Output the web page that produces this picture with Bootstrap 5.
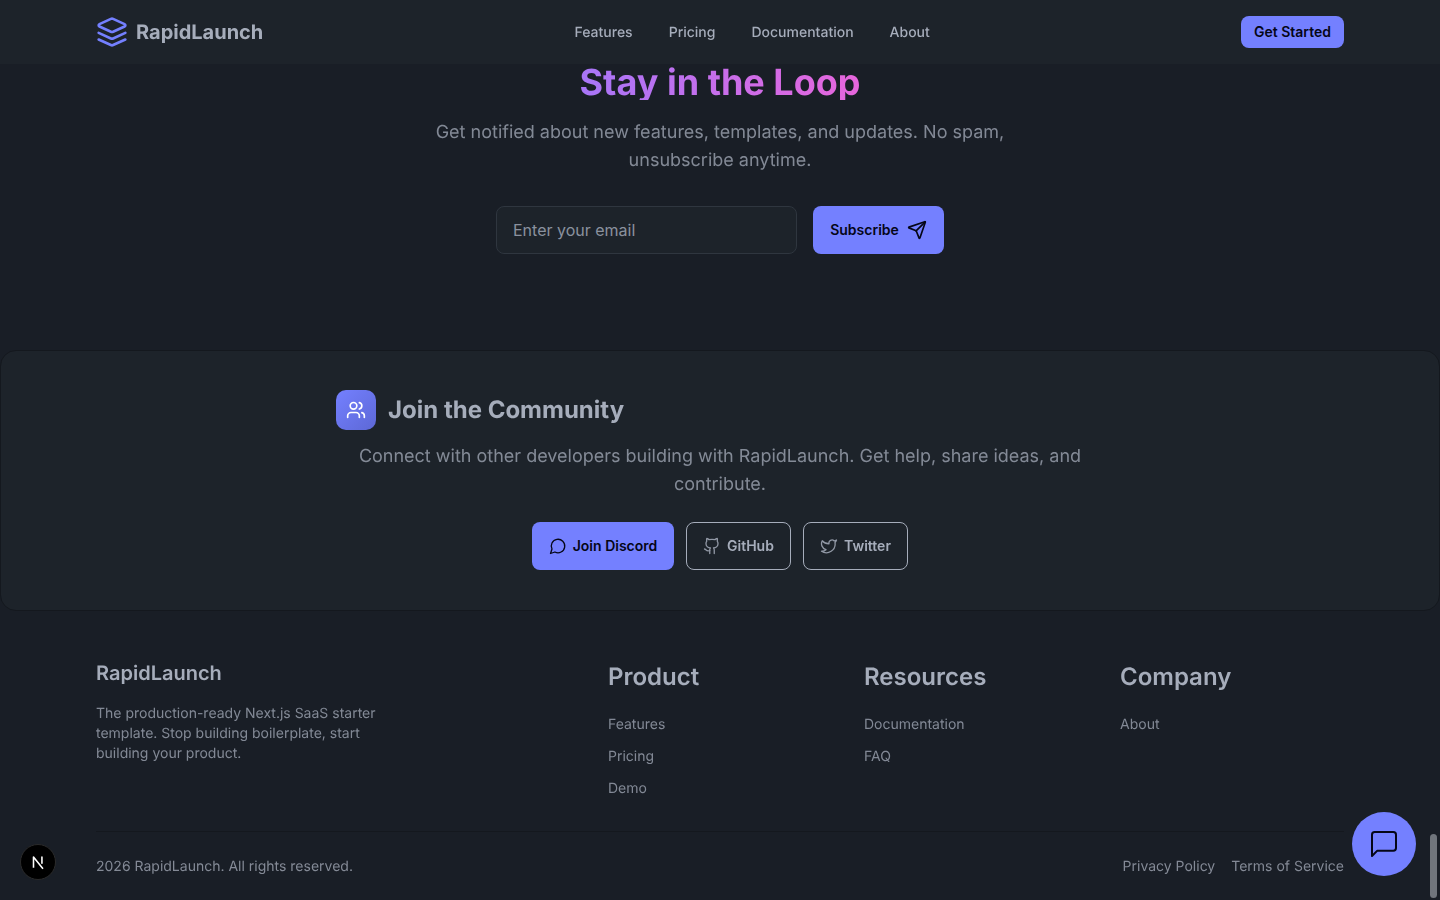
<!DOCTYPE html>
<html lang="en">
<head>
  <meta charset="UTF-8" />
  <title>RapidLaunch</title>
  <link href="https://cdn.jsdelivr.net/npm/bootstrap@5.3.3/dist/css/bootstrap.min.css" rel="stylesheet">
  <style>
    html, body { height: 100%; overflow: hidden; }
    body { background: #191e26; color: #a6adbb; font-family: Inter, "Noto Sans", sans-serif; font-size: 14px; text-rendering: geometricPrecision; }
    a, span, h2, h3, h4, h5, p, button, input { will-change: opacity; }
    svg { fill: none; stroke: currentColor; stroke-width: 2; stroke-linecap: round; stroke-linejoin: round; flex-shrink: 0; }
    a { color: inherit; text-decoration: none; }

    .top-bar { height: 64px; background: #1d232a; padding: 0 96px; }
    .logo-icon { color: #7480ff; }
    .logo-text { font-size: 20px; font-weight: 700; line-height: 28px; }
    .top-links { gap: 36px; font-weight: 500; line-height: 20px; padding-top: 1px; }
    .btn-brand { background: #7480ff; color: #050617; border: 0; font-weight: 600; border-radius: 8px; }
    .btn-brand:hover { background: #7480ff; color: #050617; }
    .btn-start { height: 32px; width: 103px; font-size: 14px; padding: 0 0 1px; }

    .news-block { height: 286px; text-align: center; }
    .news-title { font-size: 36px; line-height: 36px; font-weight: 700; margin: 0 auto 19px; background: linear-gradient(90deg, #a876f8, #e766dc); -webkit-background-clip: text; background-clip: text; color: transparent; width: max-content; }
    .news-text { font-size: 18px; line-height: 28px; color: #a6adbb; opacity: .75; width: 672px; margin: 0 auto 31px; }
    .email-box { width: 301px; height: 48px; background: #1d232a; border: 1px solid #2f363f; border-radius: 8px; font-size: 16px; padding: 0 16px; color: #a6adbb; }
    .email-box::placeholder { color: #a6adbb; opacity: .8; }
    .email-box:focus { background: #1d232a; color: #a6adbb; border-color: #2f363f; box-shadow: none; }
    .btn-sub { width: 131px; height: 48px; font-size: 14px; padding: 0 0 1px; }

    .community { height: 261px; background: #1d232a; border: 1px solid #14181e; border-radius: 16px; padding-top: 39px; }
    .community-inner { width: 768px; }
    .users-badge { width: 40px; height: 40px; border-radius: 10px; background: linear-gradient(135deg, #7480ff, #5d68d6); color: #fff; }
    .community-title { font-size: 24px; line-height: 40px; font-weight: 700; margin: 0; }
    .community-text { font-size: 18px; line-height: 28px; opacity: .75; margin: 13px 0 23px; text-align: center; }
    .community-btns { gap: 12px; }
    .btn-wide { height: 48px; font-size: 14px; padding: 0 0 1px; gap: 6px; }
    .btn-wide svg { stroke-width: 1.75; }
    .btn-discord { width: 142px; }
    .btn-line { background: transparent; border: 1px solid #a6adbb; color: #a6adbb; font-weight: 600; border-radius: 8px; }
    .btn-line:hover { background: transparent; border-color: #a6adbb; color: #a6adbb; }
    .btn-gh { width: 105px; }
    .btn-tw { width: 105px; }
    .btn-line svg { opacity: .85; }

    .foot { padding: 0 96px; }
    .foot-grid { display: grid; grid-template-columns: 1fr repeat(3, 224px); gap: 32px; height: 221px; padding-top: 48px; border-bottom: 1px solid #14181e; }
    .foot-brand { font-size: 20px; line-height: 28px; font-weight: 600; margin: 0 0 17px; }
    .foot-desc { line-height: 20px; opacity: .75; width: 296px; margin: 0; }
    .foot-head { font-size: 24px; line-height: 32px; font-weight: 600; margin: 2px 0 22px; }
    .foot-list { opacity: .75; line-height: 20px; gap: 12px; }
    .foot-end { padding-top: 25px; line-height: 20px; color: #848a96; }

    .chat-fab { position: fixed; right: 24px; bottom: 24px; width: 64px; height: 64px; border-radius: 50%; background: #7480ff; color: #050617; }
    .chat-fab svg { stroke-width: 1.5; }
    .next-mark { position: fixed; left: 20px; bottom: 20px; width: 36px; height: 36px; border-radius: 50%; background: #000; border: 1px solid #2b2b2b; }
    .scroll-thumb { position: fixed; right: 3px; top: 834px; width: 7px; height: 64px; border-radius: 4px; background: #70757c; }
  </style>
</head>
<body>

<nav class="top-bar d-flex align-items-center justify-content-between">
  <a href="#" class="d-flex align-items-center gap-2">
    <svg class="logo-icon" width="32" height="32" viewBox="0 0 24 24"><path d="m12.83 2.18a2 2 0 0 0-1.66 0L2.6 6.08a1 1 0 0 0 0 1.83l8.58 3.91a2 2 0 0 0 1.66 0l8.58-3.9a1 1 0 0 0 0-1.83Z"/><path d="m22 17.65-9.17 4.16a2 2 0 0 1-1.66 0L2 17.65"/><path d="m22 12.65-9.17 4.16a2 2 0 0 1-1.66 0L2 12.65"/></svg>
    <span class="logo-text">RapidLaunch</span>
  </a>
  <div class="top-links d-flex">
    <a href="#">Features</a>
    <a href="#">Pricing</a>
    <a href="#">Documentation</a>
    <a href="#">About</a>
  </div>
  <button class="btn btn-brand btn-start">Get Started</button>
</nav>

<section class="news-block">
  <h2 class="news-title">Stay in the Loop</h2>
  <p class="news-text">Get notified about new features, templates, and updates. No spam, unsubscribe anytime.</p>
  <form class="d-flex justify-content-center gap-3">
    <input class="form-control email-box" type="email" placeholder="Enter your email">
    <button type="button" class="btn btn-brand btn-sub d-flex align-items-center justify-content-center gap-2">
      Subscribe
      <svg width="20" height="20" viewBox="0 0 24 24"><path d="M14.536 21.686a.5.5 0 0 0 .937-.024l6.5-19a.496.496 0 0 0-.635-.635l-19 6.5a.5.5 0 0 0-.024.937l7.93 3.18a2 2 0 0 1 1.112 1.11z"/><path d="m21.854 2.147-10.94 10.939"/></svg>
    </button>
  </form>
</section>

<section class="community">
  <div class="community-inner mx-auto">
    <div class="d-flex align-items-center gap-2">
      <div class="users-badge d-flex align-items-center justify-content-center me-1">
        <svg width="20" height="20" viewBox="0 0 24 24"><path d="M16 21v-2a4 4 0 0 0-4-4H6a4 4 0 0 0-4 4v2"/><circle cx="9" cy="7" r="4"/><path d="M22 21v-2a4 4 0 0 0-3-3.87"/><path d="M16 3.13a4 4 0 0 1 0 7.75"/></svg>
      </div>
      <h3 class="community-title">Join the Community</h3>
    </div>
    <p class="community-text">Connect with other developers building with RapidLaunch. Get help, share ideas, and contribute.</p>
    <div class="community-btns d-flex justify-content-center">
      <button class="btn btn-brand btn-wide btn-discord d-flex align-items-center justify-content-center">
        <svg width="18" height="18" viewBox="0 0 24 24"><path d="M7.9 20A9 9 0 1 0 4 16.1L2 22Z"/></svg>
        Join Discord
      </button>
      <button class="btn btn-line btn-wide btn-gh d-flex align-items-center justify-content-center">
        <svg width="18" height="18" viewBox="0 0 24 24"><path d="M15 22v-4a4.8 4.8 0 0 0-1-3.5c3 0 6-2 6-5.5.08-1.25-.27-2.48-1-3.5.28-1.15.28-2.35 0-3.5 0 0-1 0-3 1.5-2.64-.5-5.36-.5-8 0C6 2 5 2 5 2c-.3 1.15-.3 2.35 0 3.5A5.403 5.403 0 0 0 4 9c0 3.5 3 5.5 6 5.5-.39.49-.68 1.05-.85 1.65-.17.6-.22 1.23-.15 1.85v4"/><path d="M9 18c-4.51 2-5-2-7-2"/></svg>
        GitHub
      </button>
      <button class="btn btn-line btn-wide btn-tw d-flex align-items-center justify-content-center">
        <svg width="18" height="18" viewBox="0 0 24 24"><path d="M22 4s-.7 2.1-2 3.4c1.6 10-9.4 17.3-18 11.6 2.2.1 4.4-.6 6-2C3 15.5.5 9.6 3 5c2.2 2.6 5.6 4.1 9 4-.9-4.2 4-6.6 7-3.8 1.1 0 3-1.2 3-1.2z"/></svg>
        Twitter
      </button>
    </div>
  </div>
</section>

<footer class="foot">
  <div class="foot-grid">
    <div>
      <h4 class="foot-brand">RapidLaunch</h4>
      <p class="foot-desc">The production-ready Next.js SaaS starter template. Stop building boilerplate, start building your product.</p>
    </div>
    <div>
      <h5 class="foot-head">Product</h5>
      <div class="foot-list d-flex flex-column">
        <a href="#">Features</a>
        <a href="#">Pricing</a>
        <a href="#">Demo</a>
      </div>
    </div>
    <div>
      <h5 class="foot-head">Resources</h5>
      <div class="foot-list d-flex flex-column">
        <a href="#">Documentation</a>
        <a href="#">FAQ</a>
      </div>
    </div>
    <div>
      <h5 class="foot-head">Company</h5>
      <div class="foot-list d-flex flex-column">
        <a href="#">About</a>
      </div>
    </div>
  </div>
  <div class="foot-end d-flex justify-content-between">
    <span>2026 RapidLaunch. All rights reserved.</span>
    <div class="d-flex gap-3">
      <a href="#">Privacy Policy</a>
      <a href="#">Terms of Service</a>
    </div>
  </div>
</footer>

<button class="chat-fab btn d-flex align-items-center justify-content-center p-0 border-0">
  <svg width="32" height="32" viewBox="0 0 24 24"><path d="M21 15a2 2 0 0 1-2 2H7l-4 4V5a2 2 0 0 1 2-2h14a2 2 0 0 1 2 2z"/></svg>
</button>
<div class="next-mark d-flex align-items-center justify-content-center">
  <svg width="18" height="18" viewBox="0 0 16 16"><path d="M4 12.5V3.5l8 10" stroke="#fff" stroke-width="1.4" stroke-linecap="square"/><path d="M11.5 3.5v5.5" stroke="#fff" stroke-width="1.4"/></svg>
</div>
<div class="scroll-thumb"></div>

</body>
</html>
